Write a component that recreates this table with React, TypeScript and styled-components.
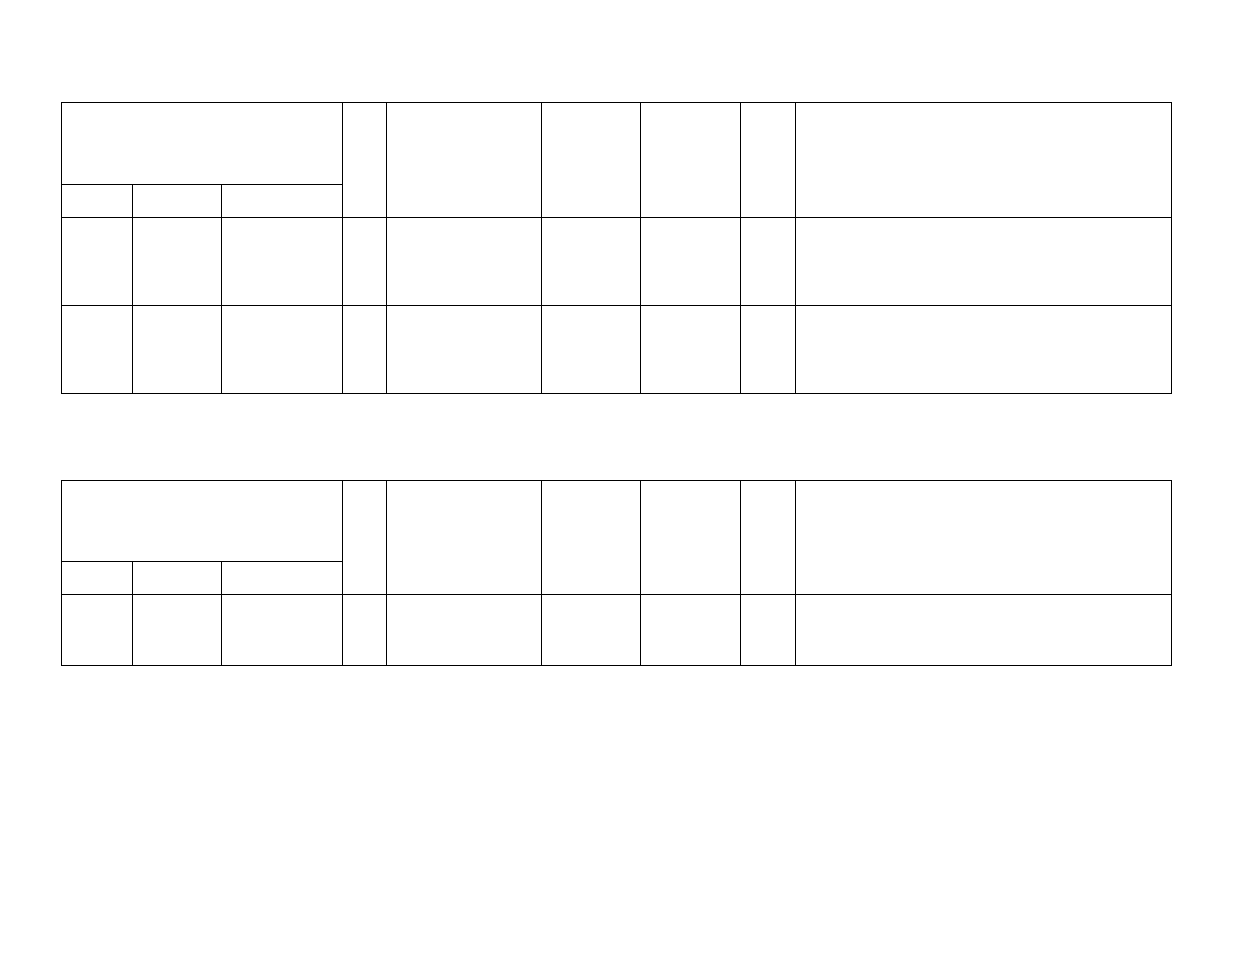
import styled, { createGlobalStyle } from "styled-components";

const GlobalStyle = createGlobalStyle`
  html, body {
    margin: 0;
    padding: 0;
    background: #fff;
    font-family: "Liberation Sans", Arial, sans-serif;
  }
`;

const Page = styled.div`
  display: flex;
  flex-direction: column;
  gap: 86px;
  padding: 102px 0 0 61px;
`;

const Grid = styled.table`
  width: 1111px;
  border-collapse: collapse;
  table-layout: fixed;
  border: 1px solid #000;
`;

const Cell = styled.td`
  border: 1px solid #000;
  padding: 0;
  vertical-align: top;
  font-size: 12px;
`;

const Row = styled.tr<{ $h: number }>`
  height: ${(p) => p.$h}px;
`;

const colWidths = [71, 89, 121, 44, 155, 99, 100, 55, 376];

function Sheet({ topH, bodyRows }: { topH: number; bodyRows: number[] }) {
  return (
    <Grid>
      <colgroup>
        {colWidths.map((w, i) => (
          <col key={i} style={{ width: w }} />
        ))}
      </colgroup>
      <thead>
        <Row $h={topH}>
          <Cell as="th" colSpan={3} />
          <Cell as="th" rowSpan={2} />
          <Cell as="th" rowSpan={2} />
          <Cell as="th" rowSpan={2} />
          <Cell as="th" rowSpan={2} />
          <Cell as="th" rowSpan={2} />
          <Cell as="th" rowSpan={2} />
        </Row>
        <Row $h={33}>
          <Cell as="th" />
          <Cell as="th" />
          <Cell as="th" />
        </Row>
      </thead>
      <tbody>
        {bodyRows.map((h, r) => (
          <Row key={r} $h={h}>
            {colWidths.map((_, c) => (
              <Cell key={c} />
            ))}
          </Row>
        ))}
      </tbody>
    </Grid>
  );
}

export default function App() {
  return (
    <>
      <GlobalStyle />
      <Page>
        <Sheet topH={82} bodyRows={[88, 88]} />
        <Sheet topH={81} bodyRows={[71]} />
      </Page>
    </>
  );
}
